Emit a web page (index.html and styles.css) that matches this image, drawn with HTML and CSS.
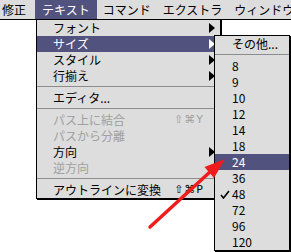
FILE: index.html
```html
<!DOCTYPE html>
<html>
<head>
    <title>テキスト メニュー</title>
    <link rel="stylesheet" href="styles.css">
</head>
<body>

<div class="menubar">
    <span class="title first">修正</span>
    <span class="title active">テキスト</span>
    <span class="title">コマンド</span>
    <span class="title">エクストラ</span>
    <span class="title">ウィンドウ</span>
</div>

<div class="menu text-menu">
    <div class="item">フォント<i class="sub"></i></div>
    <div class="item selected">サイズ<i class="sub"></i></div>
    <div class="item">スタイル<i class="sub"></i></div>
    <div class="item">行揃え<i class="sub"></i></div>
    <div class="sep"></div>
    <div class="item">エディタ...</div>
    <div class="sep"></div>
    <div class="item disabled">パス上に結合<span class="key">⇧⌘Y</span></div>
    <div class="item disabled">パスから分離</div>
    <div class="item">方向<i class="sub"></i></div>
    <div class="item disabled">逆方向</div>
    <div class="sep"></div>
    <div class="item">アウトラインに変換<span class="key">⇧⌘P</span></div>
</div>

<div class="menu size-menu">
    <div class="item">その他...</div>
    <div class="sep"></div>
    <div class="item">8</div>
    <div class="item">9</div>
    <div class="item">10</div>
    <div class="item">12</div>
    <div class="item">14</div>
    <div class="item">18</div>
    <div class="item selected">24</div>
    <div class="item">36</div>
    <div class="item checked">
        <svg class="check" width="10" height="9" viewBox="0 0 10 9"><path d="M1 5 L3.5 8 L9 1" fill="none" stroke="#000" stroke-width="1.6"/></svg>48
    </div>
    <div class="item">72</div>
    <div class="item">96</div>
    <div class="item">120</div>
</div>

<!-- red annotation arrow pointing at "24" -->
<svg class="pointer" width="291" height="252" viewBox="0 0 291 252">
    <line x1="150" y1="227" x2="211" y2="171" stroke="#ee1c1c" stroke-width="3.5" stroke-linecap="round"/>
    <polygon points="225,159 204.5,167 214,178" fill="#ee1c1c"/>
</svg>

</body>
</html>
```

FILE: styles.css
```css
body {
    margin: 0;
    background-color: white;
    font-family: "Noto Sans CJK JP", "DejaVu Sans", sans-serif;
    font-size: 12px;
    color: black;
    width: 291px;
    height: 252px;
    overflow: hidden;
    position: relative;
}

.menubar {
    display: flex;
    height: 19px;
    line-height: 19px;
    background-color: #dddddd;
    border-bottom: 1px solid black;
    white-space: nowrap;
    overflow: hidden;
}

.title {
    padding: 0 6px;
}

.title.first {
    padding: 0 9px 0 2px;
}

.title.active {
    padding: 0 7px;
    background-color: #52527e;
    color: white;
}

.menu {
    position: absolute;
    background-color: #dddddd;
    border: 1px solid black;
    box-shadow: 1px 1px 0 black;
}

.text-menu {
    left: 36px;
    top: 19px;
    width: 183px;
}

.size-menu {
    left: 214px;
    top: 35px;
    width: 74px;
}

.item {
    position: relative;
    display: flex;
    align-items: center;
    height: 16px;
    line-height: 16px;
    white-space: nowrap;
}

.text-menu .item {
    padding-left: 16px;
}

.size-menu .item {
    padding-left: 17px;
}

.item.selected {
    background-color: #52527e;
    color: white;
}

.item.disabled {
    color: #a0a0a0;
}

.sep {
    height: 6px;
    background: linear-gradient(#dddddd 2px, #8c8c8c 2px, #8c8c8c 3px, #dddddd 3px);
}

.sub {
    margin-left: auto;
    margin-right: 5px;
    width: 0;
    height: 0;
    border-left: 6px solid black;
    border-top: 5px solid transparent;
    border-bottom: 5px solid transparent;
}

.item.selected .sub {
    border-left-color: white;
}

.key {
    margin-left: auto;
    margin-right: 16px;
    font-family: "DejaVu Sans", sans-serif;
    font-size: 11px;
    letter-spacing: 1px;
}

.check {
    position: absolute;
    left: 5px;
    top: 4px;
}

.pointer {
    position: absolute;
    left: 0;
    top: 0;
    pointer-events: none;
}
```
